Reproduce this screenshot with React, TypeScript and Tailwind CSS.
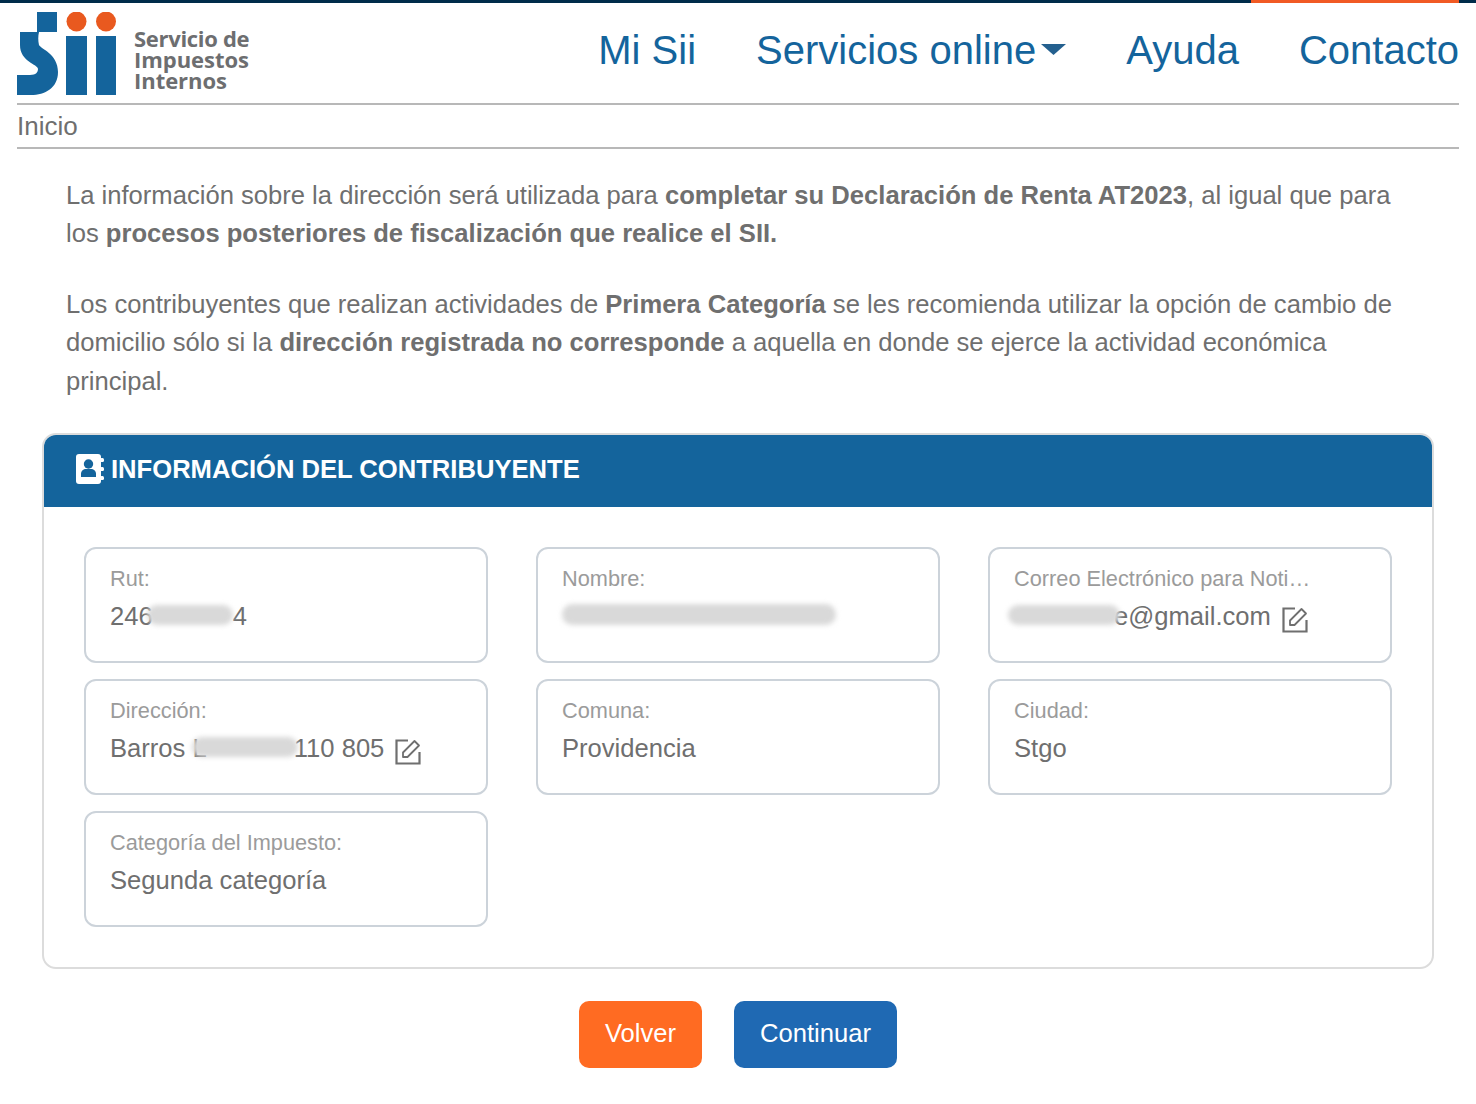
import type { ReactNode } from 'react'

function Logo() {
  return (
    <div className="flex items-start">
      <svg width="100" height="84" viewBox="0 0 100 84" className="block">
        <rect x="20" y="0" width="20" height="20" fill="#14649c" />
        <circle cx="59.5" cy="9.5" r="10" fill="#e9591f" />
        <circle cx="89" cy="9.5" r="10" fill="#e9591f" />
        <rect x="49" y="24" width="21" height="59" fill="#14649c" />
        <rect x="79" y="24" width="20" height="59" fill="#14649c" />
        <path
          d="M3 20 H22 C21 24 21 29 22 33 C24 37 41 42 41 60 C41 76 28 83 14 83 H0 V63 H13 C19 63 21 60 21 57 C21 52 3 50 3 33 Z"
          fill="#14649c"
        />
      </svg>
      <div className="ml-[17px] mt-[16px] font-['Open_Sans',sans-serif] text-[22px] leading-[21px] font-bold text-[#6d6e70]">
        <div className="tracking-[-0.3px]">Servicio de</div>
        <div className="tracking-[-0.05px]">Impuestos</div>
        <div className="tracking-[-0.05px]">Internos</div>
      </div>
    </div>
  )
}

function Field({ label, children }: { label: string; children?: ReactNode }) {
  return (
    <div className="h-[116px] rounded-[12px] border-2 border-[#ccd3da] bg-white pl-[24px] pt-[16px]">
      <div className="max-w-[300px] truncate text-[21.76px] leading-[28px] text-[#9b9b9b]">{label}</div>
      <div className="mt-[4px] flex items-start text-[25.6px] leading-[38px] text-[#6f6f6f]">{children}</div>
    </div>
  )
}

function Smudge({ className }: { className: string }) {
  return <span className={`absolute rounded-full bg-[#d9d9d9] blur-[2.5px] ${className}`} />
}

function EditIcon() {
  return (
    <svg width="26" height="26" viewBox="0 0 26 26" fill="none" className="ml-[11px] mt-[10px] shrink-0 text-[#6f6f6f]">
      <path d="M13 1.5 H1.5 V24.5 H24.5 V13" stroke="currentColor" strokeWidth="2.2" />
      <path
        d="M8 18 V13.5 L19.5 2 L24 6.5 L12.5 18 Z"
        stroke="currentColor"
        strokeWidth="1.8"
        strokeLinejoin="round"
      />
    </svg>
  )
}

function ContactIcon() {
  return (
    <svg width="28" height="30" viewBox="0 0 28 30" className="mr-[7px] shrink-0">
      <rect x="0" y="0" width="25" height="30" rx="3" fill="#ffffff" />
      <rect x="24" y="4" width="4" height="4" rx="1.5" fill="#ffffff" />
      <rect x="24" y="13" width="4" height="4" rx="1.5" fill="#ffffff" />
      <rect x="24" y="22" width="4" height="4" rx="1.5" fill="#ffffff" />
      <circle cx="12.5" cy="10" r="4.7" fill="#14649c" />
      <path d="M5 23 V20 C5 16.5 7.5 15 10 15 H15 C17.5 15 20 16.5 20 20 V23 Z" fill="#14649c" />
    </svg>
  )
}

export default function App() {
  return (
    <div className="min-h-[1104px] bg-white font-['Liberation_Sans',Arial,sans-serif] text-[#6f6f6f]">
      {/* Top bar */}
      <div className="flex h-[3px] bg-[#002c4a] pl-[1251px]">
        <div className="h-full w-[208px] bg-[#f15a24]" />
      </div>

      {/* Header */}
      <div className="px-[17px]">
        <header className="flex h-[102px] items-start justify-between border-b-2 border-[#b8b8b8] pt-[9px]">
          <Logo />
          <nav className="mt-[15px] flex items-center gap-[60px] text-[40px] leading-[46px] text-[#14649c]">
            <a>Mi Sii</a>
            <a className="flex items-center">
              Servicios online
              <svg width="25" height="13" viewBox="0 0 25 13" className="ml-[5px] mb-[2px]">
                <path d="M0 1 H25 L12.5 12 Z" fill="#24608f" />
              </svg>
            </a>
            <a>Ayuda</a>
            <a>Contacto</a>
          </nav>
        </header>
        <div className="flex h-[44px] items-center border-b-2 border-[#b8b8b8] text-[26px] leading-[30px]">
          Inicio
        </div>
      </div>

      {/* Intro text */}
      <div className="px-[66px] pt-[27px] text-[25.6px] leading-[38.4px]">
        <p>
          La información sobre la dirección será utilizada para <b>completar su Declaración de Renta AT2023</b>, al
          igual que para los <b>procesos posteriores de fiscalización que realice el SII.</b>
        </p>
        <p className="mt-[32px]">
          Los contribuyentes que realizan actividades de <b>Primera Categoría</b> se les recomienda utilizar la opción
          de cambio de domicilio sólo si la <b>dirección registrada no corresponde</b> a aquella en donde se ejerce la
          actividad económica principal.
        </p>
      </div>

      {/* Panel */}
      <div className="mx-[42px] mt-[33px] overflow-hidden rounded-[14px] border-2 border-[#dcdcdc]">
        <div className="flex h-[72px] items-center bg-[#14649c] pb-[4px] pl-[32px] text-[25.6px] font-bold text-white">
          <ContactIcon />
          INFORMACIÓN DEL CONTRIBUYENTE
        </div>
        <div className="grid grid-cols-3 gap-x-[48px] gap-y-[16px] p-[40px]">
          <Field label="Rut:">
            <span className="relative flex">
              246
              <span className="w-[80px]" />4
              <Smudge className="left-[37px] top-[8px] h-[20px] w-[86px]" />
            </span>
          </Field>
          <Field label="Nombre:">
            <span className="relative h-[38px] w-[274px]">
              <Smudge className="left-0 top-[7px] h-[21px] w-[274px]" />
            </span>
          </Field>
          <Field label="Correo Electrónico para Notificaciones:">
            <span className="relative -ml-[6px] flex pl-[106px]">
              e@gmail.com
              <Smudge className="left-0 top-[8px] h-[20px] w-[112px]" />
            </span>
            <EditIcon />
          </Field>
          <Field label="Dirección:">
            <span className="relative flex whitespace-pre">
              Barros L<span className="w-[87px]" />110 805
              <Smudge className="left-[82px] top-[8px] h-[20px] w-[106px]" />
            </span>
            <EditIcon />
          </Field>
          <Field label="Comuna:">Providencia</Field>
          <Field label="Ciudad:">Stgo</Field>
          <Field label="Categoría del Impuesto:">Segunda categoría</Field>
        </div>
      </div>

      {/* Actions */}
      <div className="mt-[32px] flex justify-center gap-[32px] text-[25.6px] text-white">
        <button className="h-[67px] w-[123px] rounded-[10px] bg-[#ff6b22] pb-[2px]">Volver</button>
        <button className="h-[67px] w-[163px] rounded-[10px] bg-[#1f69b3] pb-[2px]">Continuar</button>
      </div>
    </div>
  )
}
